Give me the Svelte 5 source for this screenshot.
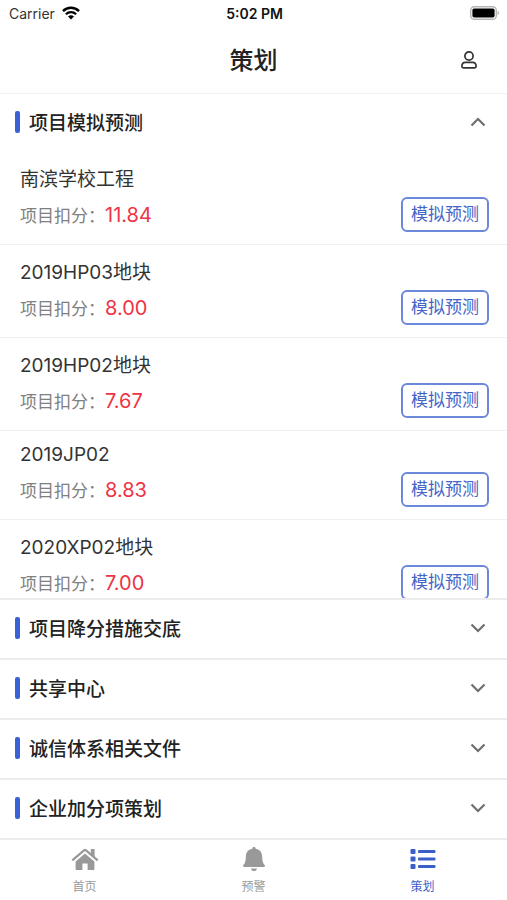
<script lang="ts">
  type Project = { name: string; score: string };

  const projects: Project[] = [
    { name: '南滨学校工程', score: '11.84' },
    { name: '2019HP03地块', score: '8.00' },
    { name: '2019HP02地块', score: '7.67' },
    { name: '2019JP02', score: '8.83' },
    { name: '2020XP02地块', score: '7.00' }
  ];

  const sections = ['项目模拟预测', '项目降分措施交底', '共享中心', '诚信体系相关文件', '企业加分项策划'];

  const tabs = [
    { id: 'home', label: '首页' },
    { id: 'alert', label: '预警' },
    { id: 'plan', label: '策划' }
  ];

  let open = $state(0);
  let active = $state('plan');

  function toggle(i: number) {
    open = open === i ? -1 : i;
  }
</script>

<div class="app">
  <div class="status">
    <div class="carrier">
      <span>Carrier</span>
      <svg width="18" height="14" viewBox="0 0 18 14" aria-hidden="true">
        <path d="M1 5.1a11.4 11.4 0 0 1 16 0" fill="none" stroke="#000" stroke-width="2.5" />
        <path d="M3.9 8.3a7.3 7.3 0 0 1 10.2 0" fill="none" stroke="#000" stroke-width="2.3" />
        <path d="M9 13.6 6 10.6a4.3 4.3 0 0 1 6 0z" fill="#000" />
      </svg>
    </div>
    <span class="time">5:02 PM</span>
    <svg class="battery" width="30" height="14" viewBox="0 0 30 14" aria-hidden="true">
      <rect x=".7" y=".7" width="25.6" height="12.6" rx="3.6" fill="#fff" stroke="#b5b5b5" stroke-width="1.4" />
      <rect x="2.4" y="2.4" width="22.2" height="9.2" rx="1.8" fill="#000" />
      <path d="M27.6 4.8c2 .8 2 3.6 0 4.4z" fill="#b5b5b5" />
    </svg>
  </div>

  <header>
    <h1>策划</h1>
    <button class="user" aria-label="我的">
      <svg width="16" height="18" viewBox="0 0 16 18" fill="none" stroke="#333" stroke-width="1.7">
        <circle cx="8" cy="5" r="4.1" />
        <path d="M4.4 11.4h7.2c2.2 0 3.500 1.600 3.500 3.900 0 1-.5 1.500-1.400 1.500H2.300c-.9 0-1.400-.5-1.400-1.500 0-2.300 1.300-3.900 3.500-3.900z" />
      </svg>
    </button>
  </header>

  <main>
    {#each sections as title, i}
      <section class:open={open === i}>
        <h2>
          <button class="head" aria-expanded={open === i} onclick={() => toggle(i)}>
            <span class="bar"></span>
            <span class="title">{title}</span>
            <svg class="chevron" width="16" height="10" viewBox="0 0 16 10" aria-hidden="true">
              <path d="M1.5 1.5 8 8l6.5-6.5" fill="none" stroke="#6e6e6e" stroke-width="2.2" />
            </svg>
          </button>
        </h2>
        {#if open === i && i === 0}
          <ul>
            {#each projects as project}
              <li>
                <h3>{project.name}</h3>
                <div class="row">
                  <span class="label">项目扣分：</span>
                  <span class="score">{project.score}</span>
                  <button class="predict">模拟预测</button>
                </div>
              </li>
            {/each}
          </ul>
        {/if}
      </section>
    {/each}
  </main>

  <nav>
    {#each tabs as tab}
      <a href="#{tab.id}" class:active={active === tab.id} onclick={() => (active = tab.id)}>
        <svg width="28" height="26" viewBox="0 0 28 26" fill="currentColor" aria-hidden="true">
          {#if tab.id === 'home'}
            <path d="M14 7.6 23.4 15.4v7.6c0 .6-.4 1-1 1h-5.8v-6.4h-5.2V24H5.600c-.6 0-1-.4-1-1v-7.6z" />
            <path d="M1.300 14.400 13 4.400q1-.8 2 0l11.700 10" fill="none" stroke="currentColor" stroke-width="2.300" />
            <path d="M19.800 3h3.800v8.600l-3.800-3.300z" />
          {:else if tab.id === 'alert'}
            <path d="M14 1c1 0 1.700.7 1.700 1.700 4.300.8 6.500 4.100 6.500 8.300 0 4.300.9 6.500 2.400 8.100.8.900.5 1.900-.8 1.900H4.200c-1.300 0-1.600-1-.8-1.900C4.900 17.500 5.800 15.300 5.800 11c0-4.200 2.200-7.500 6.500-8.300C12.300 1.700 13 1 14 1z" />
            <path d="M11 22.400h6c-.3 1.600-1.500 2.600-3 2.600s-2.700-1-3-2.600z" />
          {:else}
            <rect x="1.5" y="3" width="5" height="5" rx="1" />
            <rect x="1.5" y="10.500" width="5" height="5" rx="1" />
            <rect x="1.5" y="18" width="5" height="5" rx="1" />
            <rect x="9" y="4" width="17.5" height="3" rx="1" />
            <rect x="9" y="11.500" width="17.5" height="3" rx="1" />
            <rect x="9" y="19" width="17.5" height="3" rx="1" />
          {/if}
        </svg>
        <span>{tab.label}</span>
      </a>
    {/each}
  </nav>
</div>

<style>
  :global(body) {
    background: #fff;
  }

  .app {
    height: 100vh;
    display: flex;
    flex-direction: column;
    font-family: Inter, 'Noto Sans CJK SC', sans-serif;
    color: #222;
    background: #fff;
  }

  button {
    font-family: inherit;
    color: inherit;
    background: none;
    border: 0;
    padding: 0;
    cursor: pointer;
  }

  svg {
    display: block;
  }

  .status {
    flex: none;
    display: grid;
    grid-template-columns: 1fr auto 1fr;
    align-items: center;
    height: 26px;
    padding: 0 7px 0 9px;
    font-size: 14px;
  }

  .carrier {
    display: flex;
    align-items: center;
    gap: 7px;
    color: #333;
  }

  .time {
    font-weight: 600;
    color: #111;
  }

  .battery {
    justify-self: end;
  }

  header {
    flex: none;
    display: grid;
    grid-template-columns: 1fr auto 1fr;
    align-items: center;
    height: 67px;
    padding: 0 30px;
    border-bottom: 1px solid #f2f2f2;
  }

  h1 {
    grid-column: 2;
    margin: 0;
    padding-bottom: 2px;
    font-size: 24px;
    font-weight: 500;
  }

  .user {
    justify-self: end;
  }

  main {
    flex: 1;
    min-height: 0;
    display: flex;
    flex-direction: column;
    border-bottom: 2px solid #ececec;
  }

  section {
    flex: none;
  }

  section.open {
    flex: 0 1 auto;
    min-height: 0;
    display: flex;
    flex-direction: column;
  }

  section + section {
    border-top: 2px solid #ececec;
  }

  h2 {
    flex: none;
    margin: 0;
  }

  .head {
    display: flex;
    align-items: center;
    width: 100%;
    height: 58px;
    padding: 0 21px 2px 15px;
    text-align: left;
  }

  .bar {
    width: 5px;
    height: 22px;
    margin-right: 9px;
    border-radius: 2px;
    background: #3a62d7;
  }

  .title {
    flex: 1;
    padding-bottom: 2px;
    font-size: 19px;
    font-weight: 500;
  }

  .open .chevron {
    transform: rotate(180deg);
  }

  ul {
    flex: 0 1 auto;
    min-height: 0;
    margin: 0;
    padding: 0;
    list-style: none;
    overflow-y: auto;
    scrollbar-width: none;
  }

  li {
    padding: 12px 18px 12px 20px;
    border-bottom: 1px solid #f0f0f0;
  }

  h3 {
    margin: 0 0 6px;
    font-size: 19px;
    font-weight: 400;
    color: #333;
  }

  .row {
    display: flex;
    align-items: center;
    height: 35px;
  }

  .label {
    font-size: 17px;
    color: #808080;
  }

  .score {
    font-size: 20px;
    color: #ee3344;
  }

  .predict {
    box-sizing: border-box;
    height: 35px;
    margin-left: auto;
    padding: 0 8px;
    border: 2px solid #6c88da;
    border-radius: 6px;
    font-size: 17px;
    line-height: 1;
    color: #4464c8;
  }

  nav {
    flex: none;
    display: flex;
    height: 60px;
  }

  nav a {
    flex: 1;
    display: flex;
    flex-direction: column;
    align-items: center;
    padding-top: 6px;
    gap: 6px;
    font-size: 12px;
    line-height: 18px;
    color: #999;
    text-decoration: none;
  }

  nav a.active {
    color: #3a5fc8;
  }
</style>
